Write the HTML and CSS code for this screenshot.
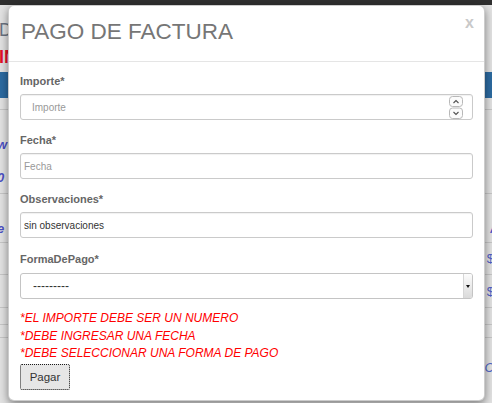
FILE: index.html
```
<!DOCTYPE html>
<html lang="es">
<head>
<meta charset="utf-8">
<title>Pago de factura</title>
<link rel="stylesheet" href="styles.css">
</head>
<body>
<div class="page">
  <div class="topbar"></div>
  <div class="pg-title">D</div>
  <div class="pg-alert">IN</div>
  <div class="thead"></div>
  <div class="row row-a"></div>
  <div class="row row-b">
    <div class="cell-l"><span class="lk">w</span><span class="lk">0</span></div>
    <div class="cell-r"></div>
  </div>
  <div class="row row-c">
    <div class="cell-l"><span class="lk">e</span></div>
    <div class="cell-r"><span class="lk">/</span></div>
  </div>
  <div class="row row-d">
    <div class="cell-l"><span class="lk plain">F</span></div>
    <div class="cell-r"><span class="lk plain">$</span></div>
  </div>
  <div class="row row-e">
    <div class="cell-l"></div>
    <div class="cell-r"><span class="lk plain">$</span></div>
  </div>
  <div class="row row-f"></div>
  <div class="row row-g"></div>
  <div class="row row-h">
    <div class="cell-l"></div>
    <div class="cell-r"><span class="lk thin">C</span></div>
  </div>
</div>

<div class="modal">
  <div class="m-head">
    <h3 class="m-title">PAGO DE FACTURA</h3>
    <span class="m-close">x</span>
  </div>
  <form class="m-body">
    <div class="grp">
      <label class="lbl">Importe*</label>
      <div class="field">
        <input class="inp inp-num" type="text" placeholder="Importe">
        <svg class="spin" width="14" height="23" viewBox="0 0 14 23">
          <rect x="0.5" y="0.5" width="13" height="10" rx="3" fill="#fbfbfb" stroke="#b8b8b8"/>
          <rect x="0.5" y="12" width="13" height="10.5" rx="3" fill="#fbfbfb" stroke="#b8b8b8"/>
          <path d="M4.5 7 L7 4.5 L9.5 7" fill="none" stroke="#505050" stroke-width="1.1"/>
          <path d="M4.5 16 L7 18.5 L9.5 16" fill="none" stroke="#505050" stroke-width="1.1"/>
        </svg>
      </div>
    </div>
    <div class="grp">
      <label class="lbl">Fecha*</label>
      <div class="field">
        <input class="inp" type="text" placeholder="Fecha">
      </div>
    </div>
    <div class="grp grp-obs">
      <label class="lbl">Observaciones*</label>
      <div class="field">
        <input class="inp" type="text" value="sin observaciones">
      </div>
    </div>
    <div class="grp grp-last">
      <label class="lbl">FormaDePago*</label>
      <div class="field">
        <select class="sel"><option>---------</option></select>
        <span class="sel-btn"><span class="tri"></span></span>
      </div>
    </div>
    <div class="errs">
      <p>*EL IMPORTE DEBE SER UN NUMERO</p>
      <p>*DEBE INGRESAR UNA FECHA</p>
      <p>*DEBE SELECCIONAR UNA FORMA DE PAGO</p>
    </div>
    <button class="btn" type="button">Pagar</button>
  </form>
</div>
</body>
</html>
```

FILE: styles.css
```
* { box-sizing: border-box; }
html, body { margin: 0; padding: 0; }
body {
  width: 492px;
  height: 403px;
  overflow: hidden;
  position: relative;
  background: #e2e2e2;
  font-family: "Liberation Sans", Arial, sans-serif;
}

/* background page (dimmed) */
.page { width: 492px; overflow: hidden; }
.topbar { height: 5px; background: #2f2f2f; }
.pg-title {
  margin: 14px 0 0 -1px;
  font-size: 18px;
  line-height: 22px;
  color: #6a7280;
  white-space: nowrap;
}
.pg-alert {
  margin: 5px 0 0 -1px;
  font-size: 18px;
  line-height: 22px;
  font-weight: bold;
  color: #e4102a;
  white-space: nowrap;
}
.thead { margin-top: 4px; height: 26px; background: #2c6aa0; }
.row {
  display: flex;
  justify-content: space-between;
  border-bottom: 1px solid #c6c6c6;
}
.row-a { height: 12px; }
.row-b { height: 84px; }
.row-c { height: 49px; }
.row-d { height: 32px; }
.row-e { height: 33px; }
.row-f { height: 17px; }
.row-g { height: 13px; }
.row-h { height: 40px; border-bottom: none; }
.cell-l, .cell-r { display: flex; flex-direction: column; }
.cell-l { margin-left: -3px; }
.cell-r { margin-right: -2px; }
.lk {
  font-size: 13px;
  line-height: 16px;
  font-weight: bold;
  font-style: italic;
  color: #4b4fc4;
}
.row-b .lk:first-child { margin-top: 27px; }
.row-b .lk + .lk { margin-top: 17px; }
.row-c .lk { margin-top: 27px; }
.row-d .lk { margin-top: 8px; font-style: normal; font-weight: normal; color: #4f5ec6; }
.row-e .lk { margin-top: 9px; font-style: normal; font-weight: normal; color: #4f5ec6; }
.row-d .cell-l .lk { margin-left: 14px; }
.row-h .lk { margin-top: 22px; font-weight: normal; color: #5068c8; }

/* modal */
.modal {
  position: absolute;
  left: 8px;
  top: 5px;
  width: 477px;
  background: #fff;
  border: 1px solid rgba(0, 0, 0, 0.2);
  border-radius: 6px;
  box-shadow: 0 3px 9px rgba(0, 0, 0, 0.45);
}
.m-head {
  display: flex;
  justify-content: space-between;
  align-items: flex-start;
  padding: 13px 10px 16px 12px;
  border-bottom: 1px solid #e5e5e5;
}
.m-title {
  margin: 0;
  font-size: 22.5px;
  line-height: 26px;
  font-weight: normal;
  color: #767676;
}
.m-close {
  margin-top: -5px;
  font-size: 16px;
  line-height: 18px;
  font-weight: bold;
  color: #c9c9c9;
}
.m-body { padding: 12px 11px 10px 11px; margin: 0; }
.grp { margin-bottom: 13px; }
.grp-obs { margin-bottom: 14px; }
.grp-last { margin-bottom: 11px; }
.lbl {
  display: block;
  margin-bottom: 5px;
  font-size: 11px;
  line-height: 15px;
  font-weight: bold;
  color: #666;
}
.grp-last .lbl { margin-bottom: 6px; }
.field { position: relative; }
.inp {
  display: block;
  width: 100%;
  height: 26px;
  margin: 0;
  padding: 0 4px 0 3px;
  border: 1px solid #cacaca;
  border-radius: 3px;
  box-shadow: inset 0 1px 1px rgba(0, 0, 0, 0.06);
  font-family: "Liberation Sans", Arial, sans-serif;
  font-size: 10px;
  color: #333;
  background: #fff;
  outline: none;
}
.inp::placeholder { color: #999; }
.inp-num { padding-left: 11px; }
.spin { position: absolute; right: 10px; top: 2px; }
.sel {
  display: block;
  width: 100%;
  height: 26px;
  margin: 0;
  padding: 0 0 0 12px;
  border: 1px solid #c4c4c4;
  border-radius: 3px;
  -webkit-appearance: none;
  appearance: none;
  background: #fff;
  font-family: "Liberation Sans", Arial, sans-serif;
  font-size: 12px;
  color: #333;
  outline: none;
}
.sel-btn {
  position: absolute;
  right: 1px;
  top: 1px;
  bottom: 1px;
  width: 9px;
  border-left: 1px solid #d6d6d6;
  border-radius: 0 2px 2px 0;
  background: linear-gradient(#fcfcfc, #dadada);
  display: flex;
  align-items: center;
  justify-content: center;
}
.tri {
  width: 0;
  height: 0;
  border-left: 2.5px solid transparent;
  border-right: 2.5px solid transparent;
  border-top: 3px solid #111;
}
.errs { margin: 0; }
.errs p {
  margin: 0;
  font-size: 12px;
  line-height: 17.5px;
  font-style: italic;
  color: #ff0000;
}
.btn {
  display: block;
  margin-top: 1px;
  width: 50px;
  height: 26px;
  padding: 0;
  border: 1px dotted #1a1a1a;
  border-radius: 2px;
  background: #e6e6e6;
  font-family: "Liberation Sans", Arial, sans-serif;
  font-size: 11.5px;
  color: #333;
}
```
